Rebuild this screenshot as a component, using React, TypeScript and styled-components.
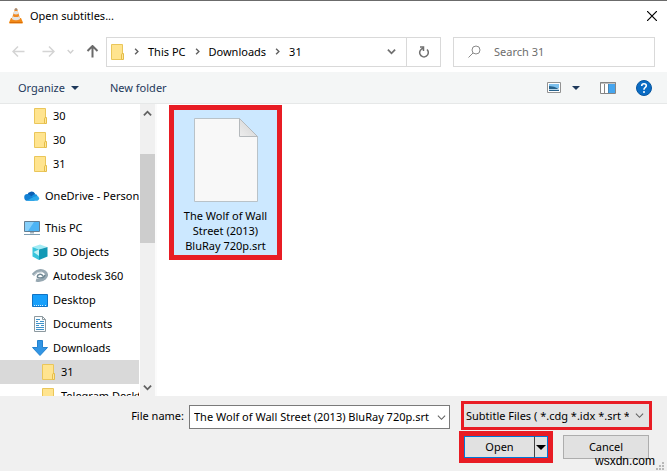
import React, { useState } from "react";
import styled, { createGlobalStyle, css } from "styled-components";

const GlobalStyle = createGlobalStyle`
  *, *::before, *::after { box-sizing: border-box; }
  body { margin: 0; background: #fff; }
  body, button, input, select {
    font-family: "Noto Sans", "Open Sans", sans-serif;
    font-size: 11px;
    line-height: 16px;
    color: #000;
  }
  button { margin: 0; padding: 0; border: 0; background: none; white-space: nowrap; }
  svg { display: block; flex: none; }
`;

const Dialog = styled.main`
  position: relative;
  display: flex;
  flex-direction: column;
  height: 100vh;
  overflow: hidden;
  border-top: 1px solid #6b6b6b;
  background: #fff;
`;

const TitleBar = styled.header`
  display: flex;
  align-items: center;
  gap: 6px;
  height: 30px;
  padding: 0 10px 0 8px;
`;

const Title = styled.h1`
  flex: 1;
  margin: 0;
  font-size: 11px;
  font-weight: 400;
`;

const IconButton = styled.button`
  display: flex;
  align-items: center;
  justify-content: center;
`;

const NavBar = styled.div`
  display: flex;
  align-items: center;
  height: 41px;
  padding: 0 12px;
`;

const History = styled.div`
  display: flex;
  align-items: center;
  gap: 12px;
  flex: none;
  width: 94px;
`;

const BackForward = styled.div`
  display: flex;
  gap: 17px;
`;

const AddressBar = styled.div`
  display: flex;
  align-items: center;
  flex: 333;
  height: 30px;
  border: 1px solid #d9d9d9;
`;

const Crumbs = styled.nav`
  display: flex;
  align-items: center;
  gap: 8px;
  flex: 1;
  padding-left: 2px;
`;

const RefreshButton = styled(IconButton)`
  width: 34px;
  height: 28px;
  margin-left: 10px;
  border-left: 1px solid #d9d9d9;
`;

const SearchBox = styled.label`
  display: flex;
  align-items: center;
  gap: 13px;
  flex: 172;
  min-width: 0;
  height: 30px;
  margin-left: 12px;
  padding: 0 14px;
  border: 1px solid #d9d9d9;

  input {
    flex: 1;
    min-width: 0;
    padding: 0;
    border: 0;
    outline: 0;
    background: none;
  }
  input::placeholder { color: #6d6d6d; opacity: 1; }
`;

const Toolbar = styled.div`
  display: flex;
  align-items: center;
  flex: none;
  height: 32px;
  padding: 0 15px 0 18px;
  border-bottom: 1px solid #e6e8e8;
  background: #f4f6f6;
`;

const ToolButton = styled.button`
  display: flex;
  align-items: center;
  gap: 6px;
  margin-right: 31px;
  color: #1e395b;
`;

const ToolIcons = styled.div`
  display: flex;
  align-items: center;
  gap: 20px;
  margin-left: auto;
`;

const ViewButton = styled(IconButton)`
  gap: 11px;
`;

const Body = styled.div`
  display: flex;
  flex: 1;
  min-height: 0;
`;

const Tree = styled.nav`
  flex: none;
  width: 139px;
  overflow: hidden;
`;

const Group = styled.ul`
  margin: 0 0 8px;
  padding: 0;
  list-style: none;
`;

const TreeRow = styled.button<{ $level: number; $selected?: boolean }>`
  display: flex;
  align-items: center;
  gap: 5px;
  width: 100%;
  height: 24px;
  padding-left: ${(p) => 24 + p.$level * 8}px;
  background: ${(p) => (p.$selected ? "#d9d9d9" : "transparent")};
`;

const ScrollBar = styled.div`
  display: flex;
  flex-direction: column;
  flex: none;
  width: 17px;
  margin-left: 1px;
  border-right: 2px solid #fbfbfb;
  background: #f0f0f0;
`;

const ScrollArrow = styled(IconButton)`
  height: 18px;
`;

const ScrollTrack = styled.div`
  display: grid;
  grid-template-rows: 32fr 89fr 135fr;
  flex: 1;
`;

const ScrollThumb = styled.div`
  grid-row: 2;
  background: #cdcdcd;
`;

const Files = styled.section`
  flex: 1;
  padding: 1px 12px;
`;

const FileTile = styled.button`
  display: flex;
  flex-direction: column;
  align-items: center;
  gap: 6px;
  width: 113px;
  padding: 8px 4px 2px;
  border: 5px solid #e81c24;
  background: #cce8ff;
  line-height: 15px;
  white-space: normal;
`;

const Footer = styled.footer`
  flex: none;
  height: 75px;
  padding: 5px 15px 0 18px;
  background: #f0f0f0;
`;

const FieldRow = styled.div`
  display: flex;
  align-items: center;
`;

const FieldLabel = styled.label`
  flex: none;
  width: 166px;
  text-align: right;
`;

const ComboBox = styled.div`
  display: flex;
  align-items: center;
  flex: 1;
  min-width: 0;
  height: 24px;
  margin: 3px 11px 0 5px;
  padding: 0 3px 0 4px;
  border: 1px solid #7a7a7a;
  background: #fff;

  input {
    flex: 1;
    min-width: 0;
    padding: 0;
    border: 0;
    outline: 0;
    background: none;
  }
`;

const TypePicker = styled.div`
  display: grid;
  align-items: center;
  flex: none;
  width: 191px;
  height: 29px;
  border: 3px solid #e81c24;
  background: #e3e3e3;

  select, svg { grid-area: 1 / 1; }
  select {
    width: 100%;
    height: 100%;
    padding: 0 20px 0 2px;
    border: 0;
    outline: 0;
    appearance: none;
    background: none;
  }
  svg { justify-self: end; margin-right: 5px; pointer-events: none; }
`;

const Actions = styled.div`
  display: flex;
  align-items: center;
  justify-content: flex-end;
  gap: 10px;
  margin-top: 1px;
  padding-right: 3px;
`;

const pushButton = css`
  height: 24px;
  border: 1px solid #adadad;
  background: #e1e1e1;
`;

const CancelButton = styled.button`
  ${pushButton}
  width: 86px;
`;

const SplitFrame = styled.div`
  display: flex;
  width: 94px;
  height: 32px;
  border: 5px solid #e81c24;
`;

const OpenButton = styled.button`
  ${pushButton}
  flex: 1;
  height: 22px;
  border-color: #0078d7;
  border-right: 0;
`;

const OpenMenuButton = styled(IconButton)`
  width: 14px;
  height: 22px;
  border: 1px solid #0078d7;
  border-left: 1px solid #444;
  background: #e1e1e1;
`;

const Watermark = styled.span`
  position: absolute;
  right: 12px;
  bottom: 3px;
  font-family: "Liberation Sans", sans-serif;
  font-size: 12px;
  line-height: 14px;
`;

const Grip = styled.svg`
  position: absolute;
  right: 3px;
  bottom: 1px;
`;

type ChevronProps = { dir: "up" | "down" | "right"; size?: number; color?: string; weight?: number };
const chevrons = { up: "M1 7 5 3l4 4", down: "M1 3l4 4 4-4", right: "M3 1l4 4-4 4" };
const Chevron = ({ dir, size = 9, color = "#606060", weight = 1.5 }: ChevronProps) => (
  <svg width={size} height={size} viewBox="0 0 10 10" fill="none" stroke={color} strokeWidth={weight}>
    <path d={chevrons[dir]} />
  </svg>
);

const Caret = ({ color = "#1e395b", size = 8 }: { color?: string; size?: number }) => (
  <svg width={size} height={size / 2} viewBox="0 0 8 4" fill={color}>
    <path d="M0 0h8L4 4z" />
  </svg>
);

const Arrow = ({ turn, color, weight }: { turn: number; color: string; weight: number }) => (
  <svg width="13" height="13" viewBox="0 0 13 13" fill="none" stroke={color} strokeWidth={weight}>
    <path transform={`rotate(${turn} 6.5 6.5)`} d="M1 6.500h11.500M6 1.500l-5 5 5 5" />
  </svg>
);

const VlcCone = () => (
  <svg width="16" height="16" viewBox="0 0 16 16">
    <path d="M3 10h10l2 4.500q0 1-1 1H2q-1 0-1-1z" fill="#f28a16" />
    <path d="M7 .5h2L12.500 12Q8 14.500 3.500 12z" fill="#f08a24" />
    <path d="M6.300 3h3.400l.9 2.800Q8 7 5.400 5.800z" fill="#e4e4e4" />
    <path d="M4.700 8.200Q8 10 11.300 8.200l.9 2.700Q8 13.500 3.800 10.900z" fill="#e4e4e4" />
    <path d="M7 .5h2l.5 1.600h-3z" fill="#9a8a80" />
    <path d="M2 14.500h12" stroke="#d86c08" />
  </svg>
);

const Folder = () => (
  <svg width="16" height="16" viewBox="-2 0 16 16">
    <path d="M.5.500h11v15H.500z" fill="#ffe48f" stroke="#eac65a" />
    <path d="M11 9.500h1.500v6H10.500V11z" fill="#ffe79c" stroke="#e5bd48" />
  </svg>
);

const OneDrive = () => (
  <svg width="16" height="12" viewBox="0 0 17 12">
    <path d="M3.500 5a4.500 4.500 0 0 1 8.300-1.500L10 8H3z" fill="#0a5fb4" />
    <path d="M4 11a3.500 3.500 0 0 1-.5-7q2 0 4 2l4 5z" fill="#1280d4" />
    <path d="M7.500 6.500 11 3.800q3 0 3.500 2.400L11 9z" fill="#1490df" />
    <path d="M3 11 10 7l4-1a2.600 2.600 0 0 1 .3 5z" fill="#2aa8ea" />
  </svg>
);

const Computer = () => (
  <svg width="16" height="16" viewBox="0 0 16 16">
    <path d="M.5 1.500h15v10H.500z" fill="#4db4f5" stroke="#647e92" />
    <path d="M1 2h9L4 11H1z" fill="#86d0fb" />
    <path d="M6 12h4v1.500H6z" fill="#a4b4bf" />
    <path d="M0 14.500h16" stroke="#7d9db2" />
  </svg>
);

const Cube = () => (
  <svg width="16" height="16" viewBox="0 0 16 16">
    <path d="M8 .5 15 3 7 5.500.5 3z" fill="#a4ecf5" />
    <path d="M.5 3 7 5.500V16L.5 12.500z" fill="#38c5dc" />
    <path d="M7 5.500 15.500 3v9.500L7 16z" fill="#1399b5" />
    <path d="M1.500 8 7 5.500V12z" fill="#c4f2f5" />
  </svg>
);

const Autodesk = () => (
  <svg width="16" height="14" viewBox="0 0 16 14" fill="none">
    <path d="M1 6q6-7 12-3 3 3 0 6-4 3.500-9 2" stroke="#97a8b2" strokeWidth="3" />
    <path d="M11 7q-2-3-5-1-2 3 2 3 4 0 5-3" stroke="#708894" strokeWidth="1.500" />
    <path d="M1 7q4-5 9-4" stroke="#cbd5da" />
  </svg>
);

const DesktopIcon = () => (
  <svg width="16" height="13" viewBox="0 0 16 13">
    <path d="M.5.500h15v12H.500z" fill="#18a0fb" stroke="#1173c4" />
    <path d="M2 11.500h9M13 11.500h1" stroke="#d2edff" strokeDasharray="1 1" />
  </svg>
);

const DocumentIcon = () => (
  <svg width="16" height="16" viewBox="0 0 16 16">
    <path d="M2.500.500h8l3 3v12h-11z" fill="#fafdff" stroke="#8d999f" />
    <path d="M10.500.500v3h3" fill="none" stroke="#8d999f" />
    <path d="M4 3.500h4M4 5.500h2M8 5.500h4M4 7.500h8M4 9.500h3M9 9.500h3M4 11.500h8M4 13.500h8" stroke="#3f91c8" />
  </svg>
);

const DownloadIcon = () => (
  <svg width="16" height="16" viewBox="0 0 16 16">
    <path d="M5.500.500h5v7h5L8 15.500.5 7.500h5z" fill="#3295e4" stroke="#2482cf" />
  </svg>
);

const BlankFile = () => (
  <svg width="64" height="84" viewBox="0 0 64 84">
    <defs>
      <linearGradient id="fold" x1="0" y1="1" x2="1" y2="0">
        <stop offset="0" stopColor="#eeeeee" />
        <stop offset="1" stopColor="#cfcfcf" />
      </linearGradient>
    </defs>
    <path d="M.5.500h45l18 18v65H.500z" fill="#f8f8f8" stroke="#b9c2c8" />
    <path d="M45.500.500v18h18z" fill="url(#fold)" stroke="#b5b9bc" />
  </svg>
);

type Item = { id: string; label: string; level: number; icon: React.ReactNode };
const groups: Item[][] = [
  [
    { id: "a", label: "30", level: 1, icon: <Folder /> },
    { id: "b", label: "30", level: 1, icon: <Folder /> },
    { id: "c", label: "31", level: 1, icon: <Folder /> },
  ],
  [{ id: "onedrive", label: "OneDrive - Personal", level: 0, icon: <OneDrive /> }],
  [
    { id: "pc", label: "This PC", level: 0, icon: <Computer /> },
    { id: "3d", label: "3D Objects", level: 1, icon: <Cube /> },
    { id: "autodesk", label: "Autodesk 360", level: 1, icon: <Autodesk /> },
    { id: "desktop", label: "Desktop", level: 1, icon: <DesktopIcon /> },
    { id: "documents", label: "Documents", level: 1, icon: <DocumentIcon /> },
    { id: "downloads", label: "Downloads", level: 1, icon: <DownloadIcon /> },
    { id: "31", label: "31", level: 2, icon: <Folder /> },
    { id: "telegram", label: "Telegram Desktop", level: 2, icon: <Folder /> },
  ],
];

export default function App() {
  const [selected, setSelected] = useState("31");
  const [fileName, setFileName] = useState("The Wolf of Wall Street (2013) BluRay 720p.srt");

  return (
    <>
      <GlobalStyle />
      <Dialog>
        <TitleBar>
          <VlcCone />
          <Title>Open subtitles...</Title>
          <IconButton aria-label="Close">
            <svg width="10" height="10" viewBox="0 0 10 10" stroke="#000" strokeWidth="1.200">
              <path d="M0 0 10 10M10 0 0 10" />
            </svg>
          </IconButton>
        </TitleBar>

        <NavBar>
          <History>
            <BackForward>
              <IconButton aria-label="Back"><Arrow turn={0} color="#d4d4d4" weight={1.5} /></IconButton>
              <IconButton aria-label="Forward"><Arrow turn={180} color="#d4d4d4" weight={1.5} /></IconButton>
            </BackForward>
            <IconButton aria-label="Recent locations"><Chevron dir="down" size={7} color="#d0d0d0" weight={2} /></IconButton>
            <IconButton aria-label="Up"><Arrow turn={90} color="#6a6a6a" weight={2} /></IconButton>
          </History>
          <AddressBar>
            <Crumbs aria-label="Address">
              <Folder />
              <Chevron dir="right" size={7} weight={2} />
              <button>This PC</button>
              <Chevron dir="right" size={7} weight={2} />
              <button>Downloads</button>
              <Chevron dir="right" size={7} weight={2} />
              <button>31</button>
            </Crumbs>
            <IconButton aria-label="Previous locations"><Chevron dir="down" color="#707070" weight={2} /></IconButton>
            <RefreshButton aria-label="Refresh">
              <svg width="11" height="12" viewBox="0 0 11 12" fill="none" stroke="#707070" strokeWidth="1.500">
                <path d="M9 3.500A4.300 4.300 0 1 1 5.500 2.300M2 1h3.500v4" />
              </svg>
            </RefreshButton>
          </AddressBar>
          <SearchBox>
            <svg width="13" height="13" viewBox="0 0 13 13" fill="none" stroke="#8a8a8a">
              <circle cx="8" cy="5" r="4" />
              <path d="M5 8 .5 12.500" />
            </svg>
            <input type="text" placeholder="Search 31" aria-label="Search 31" />
          </SearchBox>
        </NavBar>

        <Toolbar>
          <ToolButton>Organize <Caret /></ToolButton>
          <ToolButton>New folder</ToolButton>
          <ToolIcons>
            <ViewButton aria-label="Change your view">
              <svg width="14" height="11" viewBox="0 0 14 11">
                <path d="M.5.500h13v10H.500z" fill="#fff" stroke="#929292" />
                <path d="M2 2h10v4H2z" fill="#7ec1ee" />
                <path d="M2 4q5 0 10 3v2H2z" fill="#27628b" />
                <path d="M2 7.500h10" stroke="#b7d5e8" />
              </svg>
              <Caret />
            </ViewButton>
            <IconButton aria-label="Show the preview pane">
              <svg width="16" height="12" viewBox="0 0 16 12">
                <path d="M.5.500h15v11H.500z" fill="#fff" stroke="#858585" />
                <path d="M0 1h16M4.500 2v9" stroke="#858585" />
                <path d="M9 2h6v9H9z" fill="#45a5ee" />
                <path d="M8.500 2v9" stroke="#4685b4" />
              </svg>
            </IconButton>
            <IconButton aria-label="Help">
              <svg width="16" height="16" viewBox="0 0 16 16" fill="none">
                <circle cx="8" cy="8" r="7.500" fill="#0a6cc4" stroke="#07569f" />
                <path d="M5.700 6q0-2.200 2.300-2.200t2.300 2q0 1-1.200 1.800T8 9.700" stroke="#fff" strokeWidth="1.600" />
                <circle cx="8" cy="11.900" r="1" fill="#fff" />
              </svg>
            </IconButton>
          </ToolIcons>
        </Toolbar>

        <Body>
          <Tree aria-label="Folders">
            {groups.map((items, i) => (
              <Group key={i}>
                {items.map((item) => (
                  <li key={item.id}>
                    <TreeRow $level={item.level} $selected={selected === item.id} onClick={() => setSelected(item.id)}>
                      {item.icon}
                      {item.label}
                    </TreeRow>
                  </li>
                ))}
              </Group>
            ))}
          </Tree>
          <ScrollBar>
            <ScrollArrow aria-label="Scroll up"><Chevron dir="up" weight={2} /></ScrollArrow>
            <ScrollTrack><ScrollThumb /></ScrollTrack>
            <ScrollArrow aria-label="Scroll down"><Chevron dir="down" weight={2} /></ScrollArrow>
          </ScrollBar>
          <Files aria-label="Files">
            <FileTile>
              <BlankFile />
              The Wolf of Wall Street (2013) BluRay 720p.srt
            </FileTile>
          </Files>
        </Body>

        <Footer>
          <FieldRow>
            <FieldLabel htmlFor="file-name">File name:</FieldLabel>
            <ComboBox>
              <input id="file-name" type="text" value={fileName} onChange={(e) => setFileName(e.target.value)} />
              <IconButton aria-label="Recent file names"><Chevron dir="down" weight={1.2} /></IconButton>
            </ComboBox>
            <TypePicker>
              <select aria-label="File type">
                <option>Subtitle Files ( *.cdg *.idx *.srt *</option>
              </select>
              <Chevron dir="down" weight={1.2} />
            </TypePicker>
          </FieldRow>
          <Actions>
            <SplitFrame>
              <OpenButton>Open</OpenButton>
              <OpenMenuButton aria-label="Open options"><Caret color="#000" size={10} /></OpenMenuButton>
            </SplitFrame>
            <CancelButton>Cancel</CancelButton>
          </Actions>
        </Footer>
        <Grip width="8" height="8" viewBox="0 0 8 8" fill="#b8b8b8">
          <path d="M6 0h2v2H6zM3 3h2v2H3zM6 3h2v2H6zM0 6h2v2H0zM3 6h2v2H3zM6 6h2v2H6z" />
        </Grip>
        <Watermark>wsxdn.com</Watermark>
      </Dialog>
    </>
  );
}
